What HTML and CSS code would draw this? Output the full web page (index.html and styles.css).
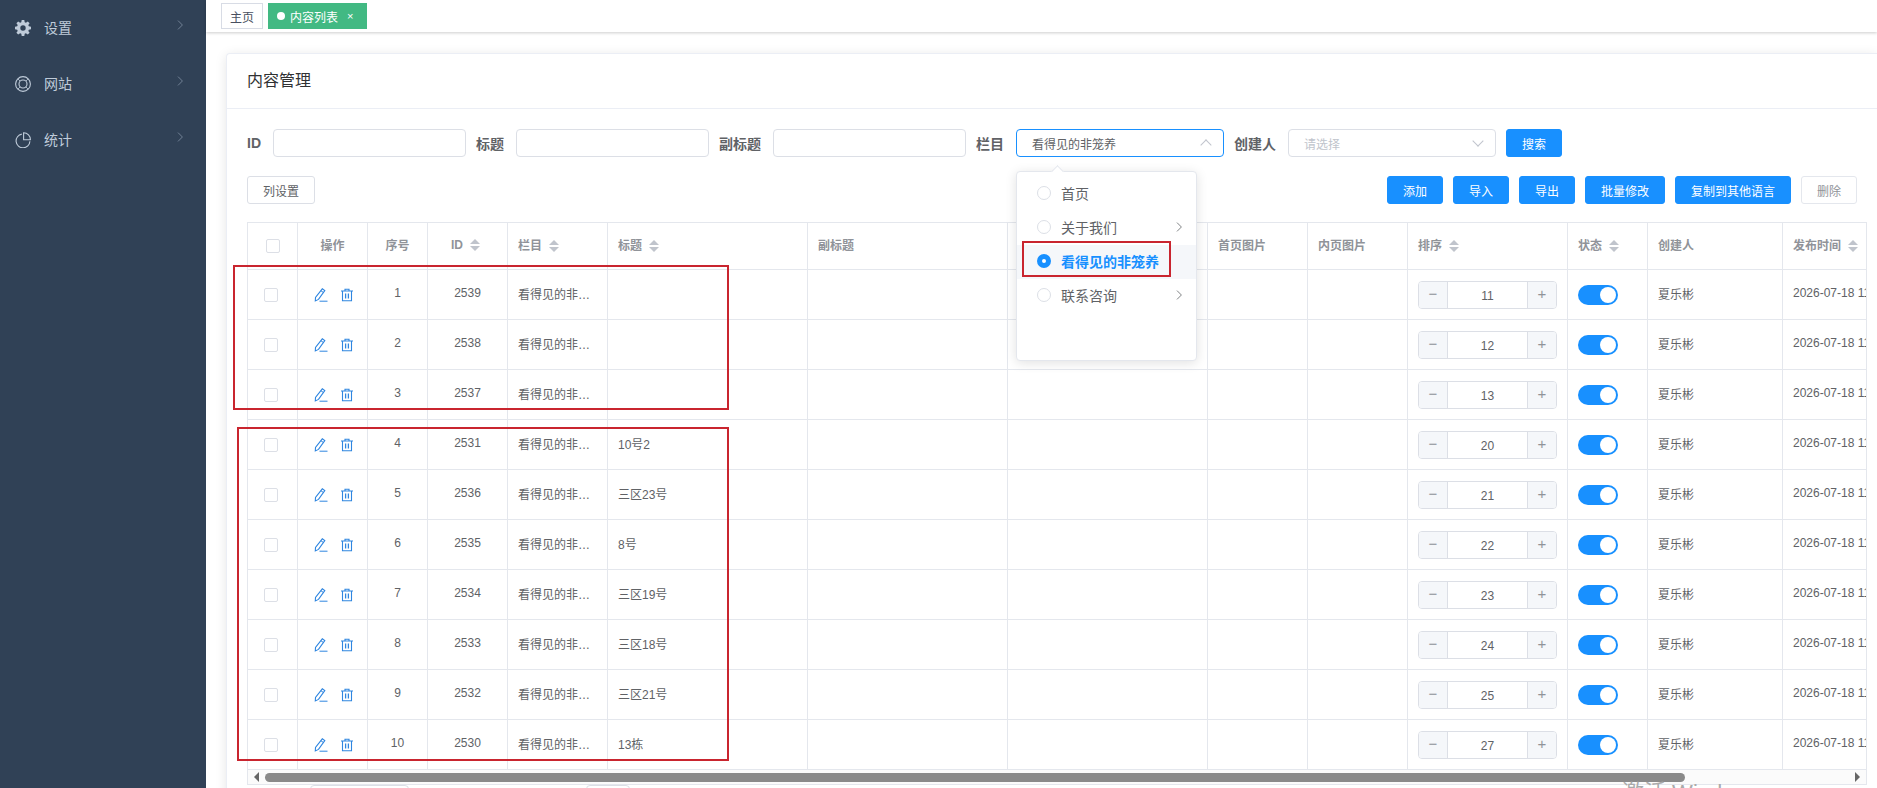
FILE: index.html
```html
<!DOCTYPE html>
<html>

	<head>
		<title>内容管理</title>
		<meta charset="utf-8">
		<link rel="stylesheet" href="styles.css">
	</head>

	<body>
		<!-- 图标 -->
		<svg class="icon-defs">
			<symbol id="i-edit" viewBox="0 0 14 14">
				<path d="M8.300 .8l2.500 1.800-6.300 8.800-3.200 1.500.2-3.400z" fill="none" stroke="currentColor" stroke-width="1.100"/>
				<path d="M6.900 2.700l2.500 1.800" fill="none" stroke="currentColor" stroke-width="1"/>
				<path d="M5.500 13.200h8" fill="none" stroke="currentColor" stroke-width="1"/>
			</symbol>
			<symbol id="i-trash" viewBox="0 0 14 14">
				<path d="M1 3h12M5 3V1.200h4V3M2.500 3v9.800h9V3" fill="none" stroke="currentColor" stroke-width="1.100"/>
				<path d="M5.600 5.500v5M8.400 5.500v5" fill="none" stroke="currentColor" stroke-width="1.300"/>
			</symbol>
			<symbol id="i-right" viewBox="0 0 10 14">
				<path d="M2.500 1.500L8 7l-5.500 5.500" fill="none" stroke="currentColor" stroke-width="1"/>
			</symbol>
		</svg>

		<div class="layout">
			<div class="sidebar">
				<a class="menu-item" href="javascript:;">
					<svg class="menu-icon" viewBox="0 0 16 16">
						<path d="M6.700 0h2.600l.4 2.200 1.200.5L12.800 1.400l1.800 1.800-1.300 1.900.5 1.200 2.200.4v2.600l-2.200.4-.5 1.200 1.300 1.900-1.800 1.800-1.900-1.300-1.200.5-.4 2.200H6.700l-.4-2.200-1.200-.5-1.900 1.300-1.800-1.800 1.300-1.900-.5-1.200L0 9.300V6.700l2.200-.4.500-1.200L1.400 3.200l1.800-1.800 1.900 1.300 1.200-.5zM8 5.300a2.700 2.700 0 1 0 0 5.400 2.700 2.700 0 0 0 0-5.400z" fill="currentColor" fill-rule="evenodd"/>
					</svg>
					<span class="menu-text">设置</span>
					<svg class="menu-arrow"><use href="#i-right"/></svg>
				</a>
				<a class="menu-item" href="javascript:;">
					<svg class="menu-icon" viewBox="0 0 16 16">
						<circle cx="8" cy="8" r="7.400" fill="none" stroke="currentColor" stroke-width="1.100"/>
						<circle cx="8" cy="8" r="4" fill="none" stroke="currentColor" stroke-width="1.100"/>
						<path d="M3 3l2.200 2.200M13 3l-2.200 2.200M3 13l2.200-2.200M13 13l-2.200-2.200" stroke="currentColor" stroke-width=".8"/>
					</svg>
					<span class="menu-text">网站</span>
					<svg class="menu-arrow"><use href="#i-right"/></svg>
				</a>
				<a class="menu-item" href="javascript:;">
					<svg class="menu-icon" viewBox="0 0 16 16">
						<path d="M6.800 2.100A6.900 6.900 0 1 0 14.900 9.200" fill="none" stroke="currentColor" stroke-width="1.100"/>
						<path d="M8.600 .7A6.800 6.800 0 0 1 15.400 7.800H8.600z" fill="none" stroke="currentColor" stroke-width="1.100"/>
					</svg>
					<span class="menu-text">统计</span>
					<svg class="menu-arrow"><use href="#i-right"/></svg>
				</a>
			</div>

			<div class="main">
				<div class="tags">
					<a class="tag" href="javascript:;">主页</a>
					<a class="tag tag-active" href="javascript:;"><i class="tag-dot"></i>内容列表<span class="tag-close">×</span></a>
				</div>

				<div class="content">
					<div class="card">
						<div class="card-title">内容管理</div>
						<div class="card-body">
							<div class="filter">
								<label class="filter-label">ID</label>
								<input class="input" type="text">
								<label class="filter-label">标题</label>
								<input class="input" type="text">
								<label class="filter-label">副标题</label>
								<input class="input" type="text">
								<label class="filter-label">栏目</label>
								<div class="select select-open">
									<span>看得见的非笼养</span>
									<i class="select-arrow"></i>
									<div class="dropdown">
										<ul class="dropdown-list">
											<li class="dropdown-item"><i class="radio"></i>首页</li>
											<li class="dropdown-item"><i class="radio"></i>关于我们<svg class="dropdown-arrow"><use href="#i-right"/></svg></li>
											<li class="dropdown-item dropdown-active"><i class="radio radio-on"></i>看得见的非笼养</li>
											<li class="dropdown-item"><i class="radio"></i>联系咨询<svg class="dropdown-arrow"><use href="#i-right"/></svg></li>
										</ul>
									</div>
								</div>
								<label class="filter-label">创建人</label>
								<div class="select">
									<span class="placeholder">请选择</span>
									<i class="select-arrow"></i>
								</div>
								<button class="btn btn-primary">搜索</button>
							</div>

							<div class="toolbar">
								<button class="btn">列设置</button>
								<div class="toolbar-right">
									<button class="btn btn-primary">添加</button>
									<button class="btn btn-primary">导入</button>
									<button class="btn btn-primary">导出</button>
									<button class="btn btn-primary">批量修改</button>
									<button class="btn btn-primary">复制到其他语言</button>
									<button class="btn btn-muted">删除</button>
								</div>
							</div>

							<div class="table-box">
								<div class="table-scroll">
									<table class="table">
										<colgroup>
											<col class="w50"><col class="w70"><col class="w60"><col class="w80"><col class="w100">
											<col class="w200"><col class="w200"><col class="w200"><col class="w100"><col class="w100">
											<col class="w160"><col class="w80"><col class="w135"><col class="w200">
										</colgroup>
										<thead>
											<tr>
												<th class="center cell-box"><i class="check check-head"></i></th>
												<th class="center">操作</th>
												<th class="center">序号</th>
												<th class="center th-id">ID<i class="sort"></i></th>
												<th>栏目<i class="sort"></i></th>
												<th>标题<i class="sort"></i></th>
												<th>副标题</th>
												<th></th>
												<th>首页图片</th>
												<th>内页图片</th>
												<th>排序<i class="sort"></i></th>
												<th>状态<i class="sort"></i></th>
												<th>创建人</th>
												<th>发布时间<i class="sort"></i></th>
											</tr>
										</thead>
										<tbody>
											<tr>
												<td class="center cell-box"><i class="check"></i></td>
												<td class="center cell-box cell-op"><svg class="op"><use href="#i-edit"/></svg><svg class="op"><use href="#i-trash"/></svg></td>
												<td class="center">1</td><td class="center">2539</td><td><div class="ellipsis">看得见的非笼养</div></td><td></td><td></td><td></td><td></td><td></td>
												<td class="cell-box"><div class="number"><span class="number-btn">−</span><span class="number-val">11</span><span class="number-btn">+</span></div></td>
												<td class="cell-box"><i class="switch"></i></td><td>夏乐彬</td><td>2026-07-18 11:20:36</td>
											</tr>
											<tr>
												<td class="center cell-box"><i class="check"></i></td>
												<td class="center cell-box cell-op"><svg class="op"><use href="#i-edit"/></svg><svg class="op"><use href="#i-trash"/></svg></td>
												<td class="center">2</td><td class="center">2538</td><td><div class="ellipsis">看得见的非笼养</div></td><td></td><td></td><td></td><td></td><td></td>
												<td class="cell-box"><div class="number"><span class="number-btn">−</span><span class="number-val">12</span><span class="number-btn">+</span></div></td>
												<td class="cell-box"><i class="switch"></i></td><td>夏乐彬</td><td>2026-07-18 11:20:36</td>
											</tr>
											<tr>
												<td class="center cell-box"><i class="check"></i></td>
												<td class="center cell-box cell-op"><svg class="op"><use href="#i-edit"/></svg><svg class="op"><use href="#i-trash"/></svg></td>
												<td class="center">3</td><td class="center">2537</td><td><div class="ellipsis">看得见的非笼养</div></td><td></td><td></td><td></td><td></td><td></td>
												<td class="cell-box"><div class="number"><span class="number-btn">−</span><span class="number-val">13</span><span class="number-btn">+</span></div></td>
												<td class="cell-box"><i class="switch"></i></td><td>夏乐彬</td><td>2026-07-18 11:20:36</td>
											</tr>
											<tr>
												<td class="center cell-box"><i class="check"></i></td>
												<td class="center cell-box cell-op"><svg class="op"><use href="#i-edit"/></svg><svg class="op"><use href="#i-trash"/></svg></td>
												<td class="center">4</td><td class="center">2531</td><td><div class="ellipsis">看得见的非笼养</div></td><td>10号2</td><td></td><td></td><td></td><td></td>
												<td class="cell-box"><div class="number"><span class="number-btn">−</span><span class="number-val">20</span><span class="number-btn">+</span></div></td>
												<td class="cell-box"><i class="switch"></i></td><td>夏乐彬</td><td>2026-07-18 11:20:36</td>
											</tr>
											<tr>
												<td class="center cell-box"><i class="check"></i></td>
												<td class="center cell-box cell-op"><svg class="op"><use href="#i-edit"/></svg><svg class="op"><use href="#i-trash"/></svg></td>
												<td class="center">5</td><td class="center">2536</td><td><div class="ellipsis">看得见的非笼养</div></td><td>三区23号</td><td></td><td></td><td></td><td></td>
												<td class="cell-box"><div class="number"><span class="number-btn">−</span><span class="number-val">21</span><span class="number-btn">+</span></div></td>
												<td class="cell-box"><i class="switch"></i></td><td>夏乐彬</td><td>2026-07-18 11:20:36</td>
											</tr>
											<tr>
												<td class="center cell-box"><i class="check"></i></td>
												<td class="center cell-box cell-op"><svg class="op"><use href="#i-edit"/></svg><svg class="op"><use href="#i-trash"/></svg></td>
												<td class="center">6</td><td class="center">2535</td><td><div class="ellipsis">看得见的非笼养</div></td><td>8号</td><td></td><td></td><td></td><td></td>
												<td class="cell-box"><div class="number"><span class="number-btn">−</span><span class="number-val">22</span><span class="number-btn">+</span></div></td>
												<td class="cell-box"><i class="switch"></i></td><td>夏乐彬</td><td>2026-07-18 11:20:36</td>
											</tr>
											<tr>
												<td class="center cell-box"><i class="check"></i></td>
												<td class="center cell-box cell-op"><svg class="op"><use href="#i-edit"/></svg><svg class="op"><use href="#i-trash"/></svg></td>
												<td class="center">7</td><td class="center">2534</td><td><div class="ellipsis">看得见的非笼养</div></td><td>三区19号</td><td></td><td></td><td></td><td></td>
												<td class="cell-box"><div class="number"><span class="number-btn">−</span><span class="number-val">23</span><span class="number-btn">+</span></div></td>
												<td class="cell-box"><i class="switch"></i></td><td>夏乐彬</td><td>2026-07-18 11:20:36</td>
											</tr>
											<tr>
												<td class="center cell-box"><i class="check"></i></td>
												<td class="center cell-box cell-op"><svg class="op"><use href="#i-edit"/></svg><svg class="op"><use href="#i-trash"/></svg></td>
												<td class="center">8</td><td class="center">2533</td><td><div class="ellipsis">看得见的非笼养</div></td><td>三区18号</td><td></td><td></td><td></td><td></td>
												<td class="cell-box"><div class="number"><span class="number-btn">−</span><span class="number-val">24</span><span class="number-btn">+</span></div></td>
												<td class="cell-box"><i class="switch"></i></td><td>夏乐彬</td><td>2026-07-18 11:20:36</td>
											</tr>
											<tr>
												<td class="center cell-box"><i class="check"></i></td>
												<td class="center cell-box cell-op"><svg class="op"><use href="#i-edit"/></svg><svg class="op"><use href="#i-trash"/></svg></td>
												<td class="center">9</td><td class="center">2532</td><td><div class="ellipsis">看得见的非笼养</div></td><td>三区21号</td><td></td><td></td><td></td><td></td>
												<td class="cell-box"><div class="number"><span class="number-btn">−</span><span class="number-val">25</span><span class="number-btn">+</span></div></td>
												<td class="cell-box"><i class="switch"></i></td><td>夏乐彬</td><td>2026-07-18 11:20:36</td>
											</tr>
											<tr>
												<td class="center cell-box"><i class="check"></i></td>
												<td class="center cell-box cell-op"><svg class="op"><use href="#i-edit"/></svg><svg class="op"><use href="#i-trash"/></svg></td>
												<td class="center">10</td><td class="center">2530</td><td><div class="ellipsis">看得见的非笼养</div></td><td>13栋</td><td></td><td></td><td></td><td></td>
												<td class="cell-box"><div class="number"><span class="number-btn">−</span><span class="number-val">27</span><span class="number-btn">+</span></div></td>
												<td class="cell-box"><i class="switch"></i></td><td>夏乐彬</td><td>2026-07-18 11:20:36</td>
											</tr>
										</tbody>
									</table>
								</div>
								<div class="scrollbar">
									<i class="scroll-left"></i>
									<div class="scroll-thumb"></div>
									<i class="scroll-right"></i>
								</div>
							</div>

							<div class="pager">
								<span class="pager-size"></span>
								<span class="pager-jump"></span>
							</div>
						</div>
					</div>
				</div>
			</div>
		</div>

		<!-- 截图上的标注框 -->
		<div class="mark mark-a"></div>
		<div class="mark mark-b"></div>
		<div class="mark mark-c"></div>
		<div class="watermark">激活 Windows</div>
	</body>

</html>
```
FILE: styles.css
```css
* {
	box-sizing: border-box;
}

html,
body {
	height: 788px;
	margin: 0;
	overflow: hidden;
}

body {
	position: relative;
	background: #fff;
	font: 12px "Liberation Sans", "Noto Sans CJK SC", sans-serif;
	color: #606266;
}

ul {
	list-style: none;
	margin: 0;
	padding: 0;
}

a {
	text-decoration: none;
}

.icon-defs {
	display: none;
}

.layout {
	display: flex;
	height: 788px;
}

/* 左侧菜单 */
.sidebar {
	width: 206px;
	flex: none;
	background: #304156;
}

.menu-item {
	display: flex;
	align-items: center;
	height: 56px;
	padding: 0 22px 0 15px;
	color: #bfcbd9;
	font-size: 14px;
}

.menu-icon {
	width: 16px;
	height: 16px;
	margin-right: 13px;
}

.menu-text {
	flex: 1;
	margin-top: -3px;
}

.menu-arrow {
	width: 8px;
	height: 12px;
	margin-top: -6px;
	color: #8291a5;
}

/* 顶部标签 */
.main {
	flex: 1;
	min-width: 0;
}

.tags {
	display: flex;
	gap: 5px;
	height: 32px;
	padding: 3px 0 0 15px;
	background: #fff;
	box-shadow: 0 1px 3px rgba(0, 0, 0, .2);
}

.tag {
	display: flex;
	align-items: center;
	height: 26px;
	padding: 0 8px;
	border: 1px solid #d8dce5;
	color: #495060;
	background: #fff;
}

.tag-active {
	width: 99px;
	background: #42b983;
	border-color: #42b983;
	color: #fff;
}

.tag-dot {
	width: 8px;
	height: 8px;
	margin-right: 5px;
	border-radius: 50%;
	background: #fff;
}

.tag-close {
	margin-left: 9px;
	font-size: 11px;
}

/* 内容卡片 */
.content {
	padding: 21px 0 0 20px;
}

.card {
	border: 1px solid #ebeef5;
	border-right: 0;
	border-radius: 4px 0 0 0;
	box-shadow: 0 2px 12px rgba(0, 0, 0, .1);
	background: #fff;
}

.card-title {
	height: 55px;
	padding-left: 20px;
	line-height: 54px;
	font-size: 16px;
	color: #303133;
	border-bottom: 1px solid #ebeef5;
}

.card-body {
	padding: 20px 10px 0 20px;
}

.filter {
	display: flex;
	align-items: center;
	height: 28px;
}

.filter-label {
	margin-right: 12px;
	font-size: 14px;
	font-weight: bold;
	color: #606266;
}

.input,
.select {
	height: 28px;
	margin-right: 10px;
	border: 1px solid #dcdfe6;
	border-radius: 4px;
	background: #fff;
}

.input {
	width: 193px;
}

.select {
	position: relative;
	display: flex;
	align-items: center;
	width: 208px;
	padding-left: 15px;
}

.select-open {
	border-color: #1890ff;
}

.placeholder {
	color: #c0c4cc;
}

.select-arrow {
	position: absolute;
	right: 13px;
	top: 7px;
	width: 8px;
	height: 8px;
	border-right: 1px solid #c0c4cc;
	border-bottom: 1px solid #c0c4cc;
	transform: rotate(45deg);
}

.select-open .select-arrow {
	top: 11px;
	transform: rotate(225deg);
}

/* 级联下拉 */
.dropdown {
	position: absolute;
	z-index: 5;
	left: -1px;
	top: 41px;
	width: 181px;
	height: 190px;
	padding: 5px 0;
	border: 1px solid #e4e7ed;
	border-radius: 4px;
	background: #fff;
	box-shadow: 0 2px 12px rgba(0, 0, 0, .12);
	font-size: 14px;
}

.dropdown:before {
	content: "";
	position: absolute;
	left: 36px;
	top: -5px;
	width: 8px;
	height: 8px;
	border-left: 1px solid #e4e7ed;
	border-top: 1px solid #e4e7ed;
	background: #fff;
	transform: rotate(45deg);
}

.dropdown-item {
	display: flex;
	align-items: center;
	height: 34px;
	padding: 0 0 2px 20px;
	color: #606266;
}

.dropdown-active {
	background: #f5f7fa;
	color: #1890ff;
	font-weight: bold;
}

.dropdown-arrow {
	width: 8px;
	height: 12px;
	margin-left: auto;
	margin-right: 13px;
}

.radio {
	width: 14px;
	height: 14px;
	margin-right: 10px;
	border: 1px solid #dcdfe6;
	border-radius: 50%;
	background: #fff;
}

.radio-on {
	border: 5px solid #1890ff;
}

/* 按钮 */
.btn {
	height: 28px;
	padding: 0 15px;
	border: 1px solid #dcdfe6;
	border-radius: 3px;
	background: #fff;
	color: #606266;
	font: inherit;
}

.btn-primary {
	border-color: #1890ff;
	background: #1890ff;
	color: #fff;
}

.btn-muted {
	color: #909399;
	border-color: #e4e7ed;
}

.filter .btn {
	width: 56px;
	padding: 0;
}

.toolbar {
	display: flex;
	justify-content: space-between;
	margin-top: 19px;
	padding-right: 10px;
}

.toolbar-right {
	display: flex;
	gap: 10px;
}

/* 表格 */
.table-box {
	margin-top: 18px;
	border: 1px solid #e4e7ed;
}

.table-scroll {
	overflow: hidden;
}

.table {
	width: 1735px;
	table-layout: fixed;
	border-collapse: separate;
	border-spacing: 0;
}

.w50 { width: 50px; }
.w60 { width: 60px; }
.w70 { width: 70px; }
.w80 { width: 80px; }
.w100 { width: 100px; }
.w135 { width: 135px; }
.w160 { width: 160px; }
.w200 { width: 200px; }

.table th,
.table td {
	padding: 0 10px 3px;
	border-right: 1px solid #e4e7ed;
	border-bottom: 1px solid #e4e7ed;
	text-align: left;
	white-space: nowrap;
	overflow: hidden;
	font-size: 12px;
}

.table th {
	height: 47px;
	font-weight: bold;
	color: #909399;
}

.table td {
	height: 50px;
	color: #606266;
}

.table .center {
	text-align: center;
}

.table .cell-box {
	padding-bottom: 0;
}

.table .cell-op {
	padding-right: 13px;
}

.table .th-id {
	padding-right: 14px;
}

.ellipsis {
	overflow: hidden;
	text-overflow: ellipsis;
}

.check {
	display: block;
	width: 14px;
	height: 14px;
	margin: 0 auto 0 6px;
	border: 1px solid #dcdfe6;
	border-radius: 2px;
	background: #fff;
}

.check-head {
	margin-left: 8px;
}

.sort {
	display: inline-block;
	position: relative;
	width: 10px;
	height: 14px;
	margin-left: 7px;
	vertical-align: -3px;
}

.sort:before,
.sort:after {
	content: "";
	position: absolute;
	left: 0;
	border: 5px solid transparent;
}

.sort:before {
	top: -4px;
	border-bottom-color: #c0c4cc;
}

.sort:after {
	bottom: -4px;
	border-top-color: #c0c4cc;
}

.op {
	width: 14px;
	height: 14px;
	margin: 0 6px;
	color: #2f86e0;
	vertical-align: middle;
}

.number {
	display: flex;
	width: 139px;
	height: 28px;
	border: 1px solid #dcdfe6;
	border-radius: 4px;
	overflow: hidden;
}

.number-btn {
	width: 28px;
	flex: none;
	background: #f5f7fa;
	color: #909399;
	font-size: 15px;
	line-height: 24px;
	text-align: center;
}

.number-val {
	flex: 1;
	border-left: 1px solid #dcdfe6;
	border-right: 1px solid #dcdfe6;
	line-height: 28px;
	text-align: center;
}

.switch {
	display: block;
	position: relative;
	width: 40px;
	height: 20px;
	border-radius: 10px;
	background: #1890ff;
}

.switch:after {
	content: "";
	position: absolute;
	right: 2px;
	top: 2px;
	width: 16px;
	height: 16px;
	border-radius: 50%;
	background: #fff;
}

/* 横向滚动条 */
.scrollbar {
	display: flex;
	align-items: center;
	height: 14px;
	background: #fbfbfb;
}

.scroll-left {
	width: 0;
	height: 0;
	margin: 0 6px;
	border: 5px solid transparent;
	border-left: 0;
	border-right-color: #666;
}

.scroll-thumb {
	width: 1420px;
	height: 9px;
	border-radius: 5px;
	background: #8a8a8a;
}

.scroll-right {
	width: 0;
	height: 0;
	margin-left: auto;
	margin-right: 6px;
	border: 5px solid transparent;
	border-right: 0;
	border-left-color: #666;
}

/* 分页，只露出顶边 */
.pager {
	display: flex;
	padding-left: 63px;
}

.pager-size,
.pager-jump {
	height: 28px;
	border: 1px solid #dcdfe6;
	border-radius: 4px;
}

.pager-size {
	width: 99px;
}

.pager-jump {
	width: 44px;
	margin-left: 177px;
}

/* 红色标注框 */
.mark {
	position: absolute;
	z-index: 10;
	border: 2px solid #c9252f;
	pointer-events: none;
}

.mark-a {
	left: 233px;
	top: 265px;
	width: 496px;
	height: 145px;
}

.mark-b {
	left: 237px;
	top: 427px;
	width: 492px;
	height: 334px;
}

.mark-c {
	left: 1022px;
	top: 241px;
	width: 149px;
	height: 36px;
}

.watermark {
	position: absolute;
	left: 1622px;
	top: 778px;
	font-size: 22px;
	line-height: 30px;
	color: #aaa;
}
```
